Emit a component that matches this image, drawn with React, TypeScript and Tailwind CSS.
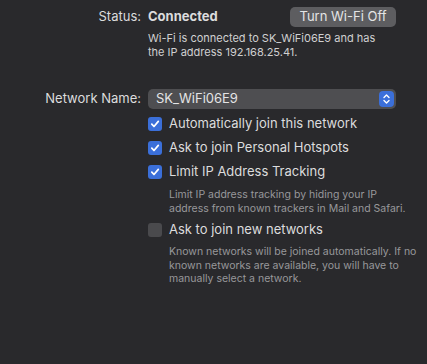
import React from 'react'

const Check: React.FC<{ checked: boolean }> = ({ checked }) =>
  checked ? (
    <span className="flex h-[14px] w-[14px] shrink-0 items-center justify-center rounded-[3px] bg-[#3b6fd9]">
      <svg width="10" height="10" viewBox="0 0 10 10" fill="none">
        <path d="M1.8 5.2 L4 7.5 L8.3 2.4" stroke="white" strokeWidth="1.7" strokeLinecap="round" strokeLinejoin="round" />
      </svg>
    </span>
  ) : (
    <span className="h-[14px] w-[14px] shrink-0 rounded-[3px] bg-[#4a4a4d]" />
  )

const Option: React.FC<{ checked: boolean; label: string }> = ({ checked, label }) => (
  <div className="flex h-[16px] items-center gap-[7px]">
    <Check checked={checked} />
    <span className="whitespace-nowrap text-[13px] text-[#dcdcdd]">{label}</span>
  </div>
)

export default function App() {
  return (
    <div
      className="h-[364px] w-[427px] overflow-hidden bg-[#29292c] text-[#dcdcdd]"
      style={{ fontFamily: 'Inter, "Noto Sans", sans-serif' }}
    >
      <div className="grid grid-cols-[141px_248px] gap-x-[7px] pt-[7px]">
        {/* status */}
        <div className="flex h-[20px] items-center justify-end text-[13px]">Status:</div>
        <div className="flex h-[20px] items-center justify-between">
          <span className="text-[13px] font-bold">Connected</span>
          <button className="h-[20px] w-[106px] rounded-[5px] bg-[#5d5d60] text-[13px] text-[#e4e4e5]">
            Turn Wi-Fi Off
          </button>
        </div>
        <div />
        <p className="mt-[4px] whitespace-nowrap text-[11px] leading-[14px] text-[#d0d0d1]">
          Wi-Fi is connected to SK_WiFi06E9 and has
          <br />
          the IP address 192.168.25.41.
        </p>

        {/* network name */}
        <div className="mt-[30px] flex h-[20px] items-center justify-end text-[13px]">Network Name:</div>
        <div className="mt-[30px] flex h-[20px] items-center justify-between rounded-[5px] bg-[#4e4e51] pl-[8px] pr-[2px]">
          <span className="text-[13px] text-[#e4e4e5]">SK_WiFi06E9</span>
          <span className="flex h-[16px] w-[15px] items-center justify-center rounded-[4px] bg-[#3b6fd9]">
            <svg width="9" height="12" viewBox="0 0 9 12" fill="none">
              <path d="M2 4.5 L4.5 2 L7 4.5 M2 7.5 L4.5 10 L7 7.5" stroke="white" strokeWidth="1.4" strokeLinecap="round" strokeLinejoin="round" />
            </svg>
          </span>
        </div>

        <div />
        <div className="mt-[7px] flex flex-col gap-[8px]">
          <Option checked label="Automatically join this network" />
          <Option checked label="Ask to join Personal Hotspots" />
          <Option checked label="Limit IP Address Tracking" />
        </div>

        <div />
        <p className="mt-[8px] whitespace-nowrap pl-[21px] text-[10.5px] leading-[14px] text-[#98989b]">
          Limit IP address tracking by hiding your IP
          <br />
          address from known trackers in Mail and Safari.
        </p>

        <div />
        <div className="mt-[6px]">
          <Option checked={false} label="Ask to join new networks" />
        </div>

        <div />
        <p className="mt-[7px] whitespace-nowrap pl-[21px] text-[10.5px] leading-[13.5px] text-[#98989b]">
          Known networks will be joined automatically. If no
          <br />
          known networks are available, you will have to
          <br />
          manually select a network.
        </p>
      </div>
    </div>
  )
}
